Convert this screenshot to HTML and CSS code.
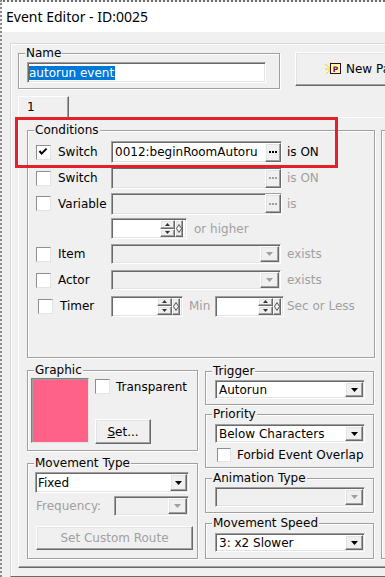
FILE: index.html
```html
<!DOCTYPE html>
<html lang="en">
<head>
  <meta charset="UTF-8" />
  <title>Event Editor - ID:0025</title>
  <link rel="stylesheet" href="styles.css">
</head>
<body>
  <div class="window">
    <div class="titlebar">Event Editor - ID:0025</div>
    <div class="client">
      <div class="frame">

        <div class="top-row">
          <div class="group name-group">
            <div class="group-title">Name</div>
            <div class="field name-field"><span class="selected">autorun event</span></div>
          </div>
          <div class="btn new-btn">
            <svg width="16" height="14" viewBox="0 0 16 14">
              <g stroke="#ffd400" stroke-width="1">
                <line x1="5" y1="6" x2="0" y2="2" />
                <line x1="5" y1="7" x2="0" y2="7" />
                <line x1="5" y1="8" x2="1" y2="12" />
                <line x1="7" y1="3" x2="5" y2="0" />
              </g>
              <rect x="5.5" y="1.5" width="10" height="10" fill="#ffff99" stroke="#2b102b" />
              <text x="7.8" y="9.8" font-family="DejaVu Sans, sans-serif" font-size="7.5" font-weight="bold" fill="#80007f">P</text>
            </svg>
            <span class="new-label">New Page</span>
          </div>
        </div>

        <div class="tab">1</div>

        <div class="tab-panel">
          <div class="highlight"></div>

          <div class="left-col">
            <div class="group conditions">
              <div class="group-title">Conditions</div>
              <div class="cond-rows">

                <div class="cond-row">
                  <span class="check">
                    <svg width="13" height="13" viewBox="0 0 13 13"><polyline points="2.5,5 4.6,7.6 9.6,2.6" fill="none" stroke="#000" stroke-width="2" /></svg>
                  </span>
                  <span class="cond-label">Switch</span>
                  <div class="field picker">
                    <span class="picker-text">0012:beginRoomAutoru</span>
                    <span class="btn dots"><svg width="8" height="2"><rect x="0" width="2" height="2" /><rect x="3" width="2" height="2" /><rect x="6" width="2" height="2" /></svg></span>
                  </div>
                  <span class="suffix">is ON</span>
                </div>

                <div class="cond-row">
                  <span class="check"></span>
                  <span class="cond-label">Switch</span>
                  <div class="field picker off">
                    <span class="picker-text"></span>
                    <span class="btn dots"><svg width="8" height="2" fill="#a0a0a0"><rect x="0" width="2" height="2" /><rect x="3" width="2" height="2" /><rect x="6" width="2" height="2" /></svg></span>
                  </div>
                  <span class="suffix off">is ON</span>
                </div>

                <div class="cond-row short">
                  <span class="check"></span>
                  <span class="cond-label">Variable</span>
                  <div class="field picker off">
                    <span class="picker-text"></span>
                    <span class="btn dots"><svg width="8" height="2" fill="#a0a0a0"><rect x="0" width="2" height="2" /><rect x="3" width="2" height="2" /><rect x="6" width="2" height="2" /></svg></span>
                  </div>
                  <span class="suffix off">is</span>
                </div>

                <div class="cond-row short">
                  <div class="field spin value-spin">
                    <span class="spin-text"></span>
                    <span class="spin-btns">
                      <span class="btn"><svg width="5" height="3"><polygon points="0,3 5,3 2.5,0" /></svg></span>
                      <span class="btn"><svg width="5" height="3"><polygon points="0,0 5,0 2.5,3" /></svg></span>
                    </span>
                    <span class="btn mini"><svg width="6" height="9" viewBox="0 0 6 9"><polygon points="3,0.5 5.5,4.5 3,8.5 0.5,4.5" fill="none" stroke="#555" /></svg></span>
                  </div>
                  <span class="suffix off higher">or higher</span>
                </div>

                <div class="cond-row">
                  <span class="check"></span>
                  <span class="cond-label">Item</span>
                  <div class="field combo off">
                    <span class="combo-text"></span>
                    <span class="btn drop"><svg width="7" height="4"><polygon points="0,0 7,0 3.5,4" fill="#a0a0a0" /></svg></span>
                  </div>
                  <span class="suffix off exists">exists</span>
                </div>

                <div class="cond-row">
                  <span class="check"></span>
                  <span class="cond-label">Actor</span>
                  <div class="field combo off">
                    <span class="combo-text"></span>
                    <span class="btn drop"><svg width="7" height="4"><polygon points="0,0 7,0 3.5,4" fill="#a0a0a0" /></svg></span>
                  </div>
                  <span class="suffix off exists">exists</span>
                </div>

                <div class="cond-row">
                  <span class="check shift"></span>
                  <span class="cond-label timer-label">Timer</span>
                  <div class="field spin min-spin">
                    <span class="spin-text"></span>
                    <span class="spin-btns">
                      <span class="btn"><svg width="5" height="3"><polygon points="0,3 5,3 2.5,0" /></svg></span>
                      <span class="btn"><svg width="5" height="3"><polygon points="0,0 5,0 2.5,3" /></svg></span>
                    </span>
                    <span class="btn mini"><svg width="6" height="9" viewBox="0 0 6 9"><polygon points="3,0.5 5.5,4.5 3,8.5 0.5,4.5" fill="none" stroke="#555" /></svg></span>
                  </div>
                  <span class="off min-label">Min</span>
                  <div class="field spin sec-spin">
                    <span class="spin-text"></span>
                    <span class="spin-btns">
                      <span class="btn"><svg width="5" height="3"><polygon points="0,3 5,3 2.5,0" /></svg></span>
                      <span class="btn"><svg width="5" height="3"><polygon points="0,0 5,0 2.5,3" /></svg></span>
                    </span>
                    <span class="btn mini"><svg width="6" height="9" viewBox="0 0 6 9"><polygon points="3,0.5 5.5,4.5 3,8.5 0.5,4.5" fill="none" stroke="#555" /></svg></span>
                  </div>
                  <span class="suffix off sec-label">Sec or Less</span>
                </div>

              </div>
            </div>

            <div class="bottom">
              <div class="col-left">
                <div class="group graphic">
                  <div class="group-title">Graphic</div>
                  <div class="graphic-body">
                    <div class="swatch"></div>
                    <div class="graphic-side">
                      <div class="check-row">
                        <span class="check"></span>
                        <span class="check-label">Transparent</span>
                      </div>
                      <div class="btn set-btn"><span><u>S</u>et...</span></div>
                    </div>
                  </div>
                </div>

                <div class="group movement">
                  <div class="group-title">Movement Type</div>
                  <div class="field select fixed-select">
                    <span class="select-text">Fixed</span>
                    <span class="btn drop"><svg width="7" height="4"><polygon points="0,0 7,0 3.5,4" /></svg></span>
                  </div>
                  <div class="freq-row">
                    <span class="off freq-label">Frequency:</span>
                    <div class="field combo off freq-combo">
                      <span class="combo-text"></span>
                      <span class="btn drop"><svg width="7" height="4"><polygon points="0,0 7,0 3.5,4" fill="#a0a0a0" /></svg></span>
                    </div>
                  </div>
                  <div class="btn route-btn off">Set Custom Route</div>
                </div>
              </div>

              <div class="col-right">
                <div class="group trigger">
                  <div class="group-title">Trigger</div>
                  <div class="field select side-select">
                    <span class="select-text">Autorun</span>
                    <span class="btn drop"><svg width="7" height="4"><polygon points="0,0 7,0 3.5,4" /></svg></span>
                  </div>
                </div>

                <div class="group priority">
                  <div class="group-title">Priority</div>
                  <div class="field select side-select">
                    <span class="select-text">Below Characters</span>
                    <span class="btn drop"><svg width="7" height="4"><polygon points="0,0 7,0 3.5,4" /></svg></span>
                  </div>
                  <div class="check-row forbid-row">
                    <span class="check small"></span>
                    <span class="check-label">Forbid Event Overlap</span>
                  </div>
                </div>

                <div class="group animation">
                  <div class="group-title">Animation Type</div>
                  <div class="field select side-select off anim-select">
                    <span class="select-text"></span>
                    <span class="btn drop"><svg width="7" height="4"><polygon points="0,0 7,0 3.5,4" fill="#a0a0a0" /></svg></span>
                  </div>
                </div>

                <div class="group speed">
                  <div class="group-title">Movement Speed</div>
                  <div class="field select side-select">
                    <span class="select-text">3: x2 Slower</span>
                    <span class="btn drop"><svg width="7" height="4"><polygon points="0,0 7,0 3.5,4" /></svg></span>
                  </div>
                </div>
              </div>
            </div>
          </div>

          <div class="group contents"></div>
        </div>

      </div>
    </div>
  </div>
</body>
</html>
```

FILE: styles.css
```css
* {
  box-sizing: border-box;
}
body {
  margin: 0;
  width: 385px;
  height: 577px;
  overflow: hidden;
  background: #f0f0f0;
  font-family: "DejaVu Sans", sans-serif;
  font-size: 12px;
  color: #000;
}
.window {
  height: 577px;
  border-top: 2px dotted #6f6f6f;
  border-left: 2px dotted #8a8a8a;
}
.titlebar {
  height: 30px;
  line-height: 30px;
  padding-left: 4px;
  background: #fff;
  font-family: "Noto Sans", sans-serif;
  font-size: 14px;
}
.client {
  padding: 11px 0 0 8px;
}
.frame {
  width: 420px;
  height: 534px;
  padding: 9px 0 0 7px;
  border: 1px solid;
  border-color: #d9d9d9 #696969 #696969 #d9d9d9;
  box-shadow: inset 1px 1px #fff;
}

/* shared widgets */
.group {
  border: 1px solid #a0a0a0;
  box-shadow: inset 1px 1px #fff, 1px 1px #fff;
}
.group-title {
  width: fit-content;
  height: 14px;
  line-height: 14px;
  margin: -8px 0 -6px 6px;
  padding: 0 1px;
  background: #f0f0f0;
}
.field {
  background: #fff;
  border: 1px solid;
  border-color: #a0a0a0 #fff #fff #a0a0a0;
  box-shadow: inset 1px 1px #696969, inset -1px -1px #e3e3e3;
}
.field.off {
  background: #f0f0f0;
}
.btn {
  display: flex;
  align-items: center;
  justify-content: center;
  background: #f0f0f0;
  border: 1px solid;
  border-color: #fff #696969 #696969 #fff;
  box-shadow: inset -1px -1px #a0a0a0, inset 1px 1px #e3e3e3;
}
.off {
  color: #a0a0a0;
}
.check {
  flex: none;
  width: 15px;
  height: 15px;
  padding: 0;
  background: #fff;
  border: 1px solid;
  border-color: #8e8e8e #e3e3e3 #e3e3e3 #8e8e8e;
}
.check svg {
  display: block;
}
.check.small {
  width: 14px;
  height: 14px;
}
.check-row {
  display: flex;
  align-items: center;
}
.check-label {
  margin-left: 6px;
  white-space: nowrap;
}

/* name row */
.top-row {
  display: flex;
  align-items: flex-start;
}
.name-group {
  width: 262px;
  height: 36px;
}
.name-field {
  width: 239px;
  height: 21px;
  margin: 8px 0 0 8px;
  padding-left: 1px;
  display: flex;
  align-items: center;
}
.selected {
  background: #0078d7;
  color: #fff;
  line-height: 14px;
  padding: 0 1px 0 0;
}
.new-btn {
  justify-content: flex-start;
  width: 120px;
  height: 34px;
  margin: -1px 0 0 15px;
  padding-left: 29px;
}
.new-btn svg {
  flex: none;
}
.new-label {
  margin-left: 5px;
  white-space: nowrap;
}

/* tab */
.tab {
  width: 51px;
  height: 21px;
  margin-top: 7px;
  padding-left: 8px;
  line-height: 20px;
  border-top: 1px solid #fff;
  border-left: 1px solid #fff;
  border-right: 1px solid #696969;
  box-shadow: inset -1px 0 #a0a0a0;
}
.tab-panel {
  position: relative;
  display: flex;
  align-items: flex-start;
  width: 420px;
  height: 451px;
  padding: 12px 0 0 8px;
  border: 1px solid;
  border-color: #fff #696969 #696969 #fff;
  box-shadow: inset -1px -1px #a0a0a0;
}
.highlight {
  position: absolute;
  left: -4px;
  top: -1px;
  width: 323px;
  height: 51px;
  border: 3px solid #e3212a;
}
.left-col {
  width: 348px;
  flex: none;
}
.contents {
  flex: none;
  width: 60px;
  height: 429px;
  margin-left: 6px;
}

/* conditions */
.conditions {
  height: 228px;
}
.cond-rows {
  padding: 8px 0 0 8px;
}
.cond-row {
  display: flex;
  align-items: center;
  height: 26px;
  white-space: nowrap;
}
.cond-row.short {
  height: 25px;
}
.cond-label {
  width: 53px;
  margin-left: 7px;
}
.check.shift {
  margin-left: 2px;
}
.timer-label {
  width: 51px;
}
.suffix {
  margin-left: 5px;
}
.picker {
  display: flex;
  align-items: center;
  width: 171px;
  height: 22px;
  padding: 1px 0 1px 2px;
}
.picker-text {
  flex: 1;
  overflow: hidden;
  padding-left: 1px;
}
.dots {
  width: 16px;
  height: 19px;
}
.dots svg {
  display: block;
}
.spin {
  display: flex;
  height: 21px;
  padding: 1px 3px 1px 1px;
}
.spin-text {
  flex: 1;
}
.spin-btns {
  display: flex;
  flex-direction: column;
  width: 15px;
}
.spin-btns .btn {
  flex: 1;
}
.spin-btns svg {
  fill: #333;
  display: block;
}
.mini {
  width: 8px;
}
.mini svg {
  display: block;
}
.value-spin {
  width: 76px;
  margin-left: 75px;
}
.higher {
  margin-left: 7px;
}
.combo {
  display: flex;
  width: 170px;
  height: 20px;
  padding: 1px;
}
.combo-text {
  flex: 1;
}
.drop {
  width: 19px;
}
.drop svg {
  display: block;
}
.exists {
  margin-left: 6px;
}
.min-spin {
  width: 72px;
  padding-right: 2px;
}
.min-label {
  width: 26px;
  margin-left: 6px;
}
.sec-spin {
  width: 69px;
  padding-right: 2px;
}
.sec-label {
  margin-left: 3px;
}

/* lower half */
.bottom {
  display: flex;
  align-items: flex-start;
  gap: 7px;
  margin-top: 12px;
}
.col-left {
  width: 171px;
  flex: none;
}
.col-right {
  width: 169px;
  flex: none;
  margin-top: 1px;
}
.graphic {
  height: 81px;
}
.graphic-body {
  display: flex;
  padding: 7px 0 0 3px;
}
.swatch {
  width: 58px;
  height: 65px;
  background: #ff6288;
  border: 1px solid;
  border-color: #808080 #e3e3e3 #e3e3e3 #808080;
  box-shadow: inset 1px 1px #a0a0a0;
}
.graphic-side {
  margin-left: 6px;
  padding-top: 1px;
}
.set-btn {
  width: 56px;
  height: 25px;
  margin-top: 25px;
}
.movement {
  height: 96px;
  margin-top: 12px;
}
.select {
  display: flex;
  align-items: center;
  padding: 1px;
}
.select-text {
  flex: 1;
  padding-left: 1px;
  white-space: nowrap;
}
.select .drop {
  align-self: stretch;
}
.fixed-select {
  width: 154px;
  height: 21px;
  margin: 8px 0 0 7px;
}
.fixed-select .drop {
  width: 17px;
}
.freq-row {
  display: flex;
  align-items: center;
  margin-top: 3px;
  padding-left: 8px;
}
.freq-label {
  width: 78px;
}
.freq-combo {
  width: 75px;
}
.route-btn {
  width: 157px;
  height: 24px;
  margin: 10px 0 0 8px;
}
.side-select {
  width: 150px;
  height: 19px;
  margin-left: 9px;
}
.side-select .select-text {
  padding-left: 2px;
}
.side-select .drop {
  width: 18px;
}
.trigger {
  height: 34px;
}
.trigger .side-select {
  margin-top: 8px;
}
.priority {
  height: 54px;
  margin-top: 9px;
}
.priority .side-select {
  margin-top: 9px;
}
.forbid-row {
  margin-top: 5px;
  padding-left: 11px;
}
.animation {
  height: 35px;
  margin-top: 10px;
}
.anim-select {
  height: 20px;
  margin-top: 8px;
}
.speed {
  height: 36px;
  margin-top: 10px;
}
.speed .side-select {
  margin-top: 9px;
}
```
